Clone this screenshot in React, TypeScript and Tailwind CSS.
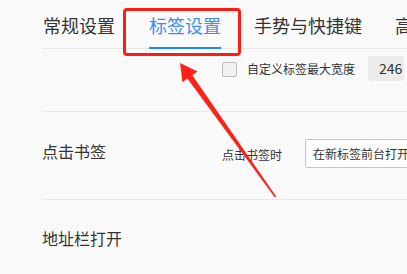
import React from "react";

export default function App() {
  const font = { fontFamily: '"Noto Sans CJK SC", "Noto Sans", sans-serif' };
  return (
    <div
      className="relative w-[407px] h-[274px] overflow-hidden bg-[#fafafa] text-[#333333]"
      style={font}
    >
      <div className="pl-[42px]">
        {/* Tabs */}
        <div className="flex h-[49px] border-b border-[#e6e6e6] pt-[14px] whitespace-nowrap">
          <div className="relative text-[18px] leading-[22px] pl-[1px]">常规设置</div>
          <div className="relative ml-[34px] text-[18px] leading-[22px] text-[#3f8cf5]">
            标签设置
            <div className="absolute left-0 right-0 top-[33px] h-[2px] bg-[#1b8bf9]" />
          </div>
          <div className="ml-[33px] text-[18px] leading-[22px]">手势与快捷键</div>
          <div className="ml-[33px] text-[18px] leading-[22px]">高级设置</div>
        </div>

        {/* Section 1 */}
        <div className="flex h-[63px] border-b border-[#e8e8e8] pt-[7px]">
          <div className="w-[180px] shrink-0" />
          <div className="flex h-[25px] items-center whitespace-nowrap">
            <div className="w-[15px] h-[15px] mt-[2px] rounded-[2px] border border-[#bcbcbc] bg-[#f1f1f1]" />
            <div className="ml-[10px] text-[12px] leading-[16px] mt-[1px]">自定义标签最大宽度</div>
            <div className="ml-[13px] w-[36px] h-[25px] rounded-[3px] bg-[#ebebeb] pl-[11px] text-[14px] leading-[25px] text-[#333]">
              246
            </div>
          </div>
        </div>

        {/* Section 2 */}
        <div className="flex h-[88px] border-b border-[#e8e8e8] pt-[27px] whitespace-nowrap">
          <div className="w-[180px] shrink-0 text-[16px] leading-[22px] mt-[1px]">点击书签</div>
          <div className="flex h-[29px] items-center">
            <div className="text-[12px] leading-[16px] mt-[2px]">点击书签时</div>
            <div className="ml-[23px] w-[160px] h-[29px] rounded-[2px] border border-[#c6c6c6] bg-white pl-[7px] text-[12px] leading-[27px]">
              在新标签前台打开
            </div>
          </div>
        </div>

        {/* Section 3 */}
        <div className="pt-[27px] text-[16px] leading-[22px]">地址栏打开</div>
      </div>

      {/* Annotation box */}
      <div className="absolute left-[123px] top-[8px] w-[118px] h-[48px] rounded-[4px] border-[3px] border-[#ff1c14]" />

      {/* Annotation arrow */}
      <svg
        className="absolute left-0 top-0"
        width="407"
        height="274"
        viewBox="0 0 407 274"
      >
        <polygon
          points="180,63 197.5,71.5 192.3,75.2 276.2,196.6 274.9,197.4 187.4,78.6 182.5,82.3"
          fill="#fb2318"
        />
      </svg>
    </div>
  );
}
